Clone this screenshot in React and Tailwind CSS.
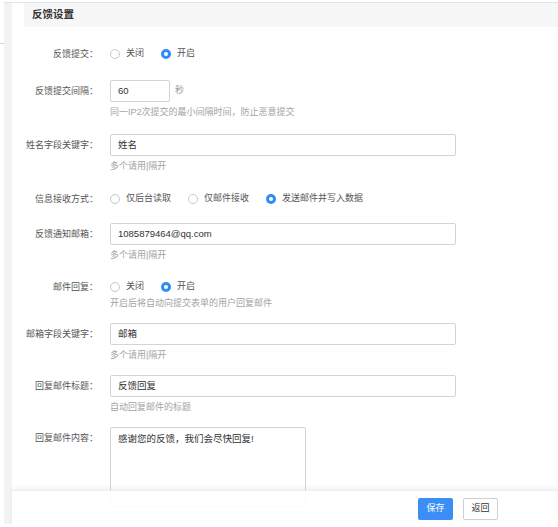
import React from "react";

const FONT = { fontFamily: '"Liberation Sans", "Noto Sans CJK SC", sans-serif' };

function Radio({ checked, label, last }) {
  return (
    <label className={`flex items-center ${last ? "" : "mr-[17px]"}`}>
      {checked ? (
        <span className="w-[10px] h-[10px] rounded-full bg-[#2f8cf4] flex items-center justify-center">
          <span className="w-[4px] h-[4px] rounded-full bg-white" />
        </span>
      ) : (
        <span className="w-[10px] h-[10px] rounded-full border border-[#c9c9c9] bg-white" />
      )}
      <span className="ml-[6px] text-[9px] text-[#555]">{label}</span>
    </label>
  );
}

function Row({ label, children, className = "" }) {
  return (
    <div className={`flex items-start ${className}`}>
      <div className="w-[86px] shrink-0 text-right text-[9px] text-[#555] h-[22px] leading-[22px]">{label}</div>
      <div className="ml-[12px] flex-1">{children}</div>
    </div>
  );
}

function Input({ value, w = "w-[346px]" }) {
  return (
    <div className={`${w} h-[22px] border border-[#d4d4d4] rounded-[2px] px-[7px] flex items-center text-[9.5px] text-[#333] bg-white`}>
      {value}
    </div>
  );
}

function Help({ children }) {
  return <div className="mt-[4px] text-[9px] leading-[12px] text-[#a3a3a3]">{children}</div>;
}

export default function App() {
  return (
    <div className="relative w-[558px] h-[527px] overflow-hidden bg-white" style={FONT}>
      <div className="absolute left-0 top-[43px] w-[4px] h-[1px] bg-[#d8d8d8]" />
      <div className="flex h-[524px]">
        <div className="w-[4px] shrink-0 bg-white" />
        <div className="w-[8px] shrink-0 bg-[#f3f3f3] border-t border-[#dfe4ee] mt-[2px]" />
        <div className="flex-1 flex flex-col">
          <div className="h-[2px]" />
          <div className="border-t border-[#dfe4ee] pl-[12px]">
            <div className="h-[24px] bg-[#f7f7f7] pl-[8px] flex items-center text-[10.5px] font-bold text-[#333]">反馈设置</div>
          </div>

          <Row label="反馈提交：" className="mt-[16px]">
            <div className="h-[22px] flex items-center">
              <Radio label="关闭" />
              <Radio label="开启" checked last />
            </div>
          </Row>

          <Row label="反馈提交间隔：" className="mt-[15px]">
            <div className="flex items-center">
              <Input value="60" w="w-[60px]" />
              <span className="ml-[5px] text-[9px] text-[#999]">秒</span>
            </div>
            <Help>同一IP2次提交的最小间隔时间，防止恶意提交</Help>
          </Row>

          <Row label="姓名字段关键字：" className="mt-[16px]">
            <Input value="姓名" />
            <Help>多个请用|隔开</Help>
          </Row>

          <Row label="信息接收方式：" className="mt-[16px]">
            <div className="h-[22px] flex items-center">
              <Radio label="仅后台读取" />
              <Radio label="仅邮件接收" />
              <Radio label="发送邮件并写入数据" checked last />
            </div>
          </Row>

          <Row label="反馈通知邮箱：" className="mt-[13px]">
            <Input value="1085879464@qq.com" />
            <Help>多个请用|隔开</Help>
          </Row>

          <Row label="邮件回复：" className="mt-[15px]">
            <div className="h-[22px] flex items-center">
              <Radio label="关闭" />
              <Radio label="开启" checked last />
            </div>
            <div className="-mt-[1px] text-[9px] leading-[12px] text-[#a3a3a3]">开启后将自动向提交表单的用户回复邮件</div>
          </Row>

          <Row label="邮箱字段关键字：" className="mt-[14px]">
            <Input value="邮箱" />
            <Help>多个请用|隔开</Help>
          </Row>

          <Row label="回复邮件标题：" className="mt-[14px]">
            <Input value="反馈回复" />
            <Help>自动回复邮件的标题</Help>
          </Row>

          <Row label="回复邮件内容：" className="mt-[14px]">
            <div className="w-[196px] h-[80px] border border-[#d4d4d4] rounded-[2px] px-[7px] pt-[4px] text-[9.5px] text-[#333] leading-[14px]">
              感谢您的反馈，我们会尽快回复!
            </div>
          </Row>
        </div>
      </div>

      <div className="absolute left-[12px] right-0 top-[490px] h-[37px] bg-white/90 shadow-[0_-2px_4px_rgba(0,0,0,0.06)] border-t border-[#eeeeee] flex items-center justify-end pr-[60px]">
        <button className="w-[35px] h-[22px] rounded-[2px] bg-[#3a8ef5] text-white text-[9px]">保存</button>
        <button className="ml-[10px] w-[35px] h-[22px] rounded-[2px] border border-[#cfcfcf] bg-white text-[#333] text-[9px]">返回</button>
      </div>
    </div>
  );
}
